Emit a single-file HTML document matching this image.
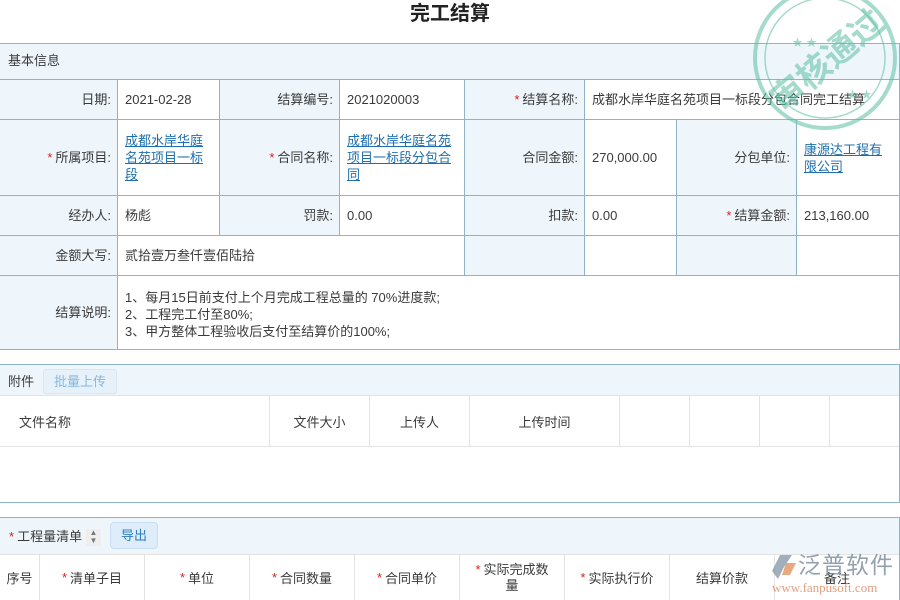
<!DOCTYPE html>
<html><head><meta charset="utf-8">
<style>
*{margin:0;padding:0;box-sizing:border-box}
body{width:900px;height:600px;overflow:hidden;background:#fff;font-family:"Liberation Sans","Noto Sans CJK SC",sans-serif;font-size:13px;color:#3a3a3a;position:relative}
.a{position:absolute}
.c{position:absolute;border-right:1px solid #8fb4c8;border-bottom:1px solid #8fb4c8;display:flex;align-items:center;padding:0 7px;line-height:17px}
.l{background:#eef6fc;justify-content:flex-end;padding-right:6px}
.v{background:#fff}
.s{color:#d9201c;margin-right:3px}
a{color:#1d6fae;text-decoration:underline}
.h{position:absolute;border-right:1px solid #e3e3e3;display:flex;align-items:center;justify-content:center;height:100%;top:0}
</style></head><body>
<div class="a" style="left:0;top:1px;width:900px;text-align:center;font-size:20px;font-weight:bold;color:#222;line-height:26px">完工结算</div>

<div class="a" style="left:0;top:43px;width:900px;height:37px;background:#eef6fc;border-top:1px solid #8fb4c8;border-bottom:1px solid #8fb4c8;border-right:1px solid #8fb4c8;padding-left:8px;line-height:34px">基本信息</div>

<div class="c l" style="left:0;top:80px;width:118px;height:40px">日期:</div>
<div class="c v" style="left:118px;top:80px;width:102px;height:40px">2021-02-28</div>
<div class="c l" style="left:220px;top:80px;width:120px;height:40px">结算编号:</div>
<div class="c v" style="left:340px;top:80px;width:125px;height:40px">2021020003</div>
<div class="c l" style="left:465px;top:80px;width:120px;height:40px"><span class="s">*</span>结算名称:</div>
<div class="c v" style="left:585px;top:80px;width:315px;height:40px">成都水岸华庭名苑项目一标段分包合同完工结算</div>

<div class="c l" style="left:0;top:120px;width:118px;height:76px"><span class="s">*</span>所属项目:</div>
<div class="c v" style="left:118px;top:120px;width:102px;height:76px"><a>成都水岸华庭名苑项目一标段</a></div>
<div class="c l" style="left:220px;top:120px;width:120px;height:76px"><span class="s">*</span>合同名称:</div>
<div class="c v" style="left:340px;top:120px;width:125px;height:76px"><a>成都水岸华庭名苑项目一标段分包合同</a></div>
<div class="c l" style="left:465px;top:120px;width:120px;height:76px">合同金额:</div>
<div class="c v" style="left:585px;top:120px;width:92px;height:76px">270,000.00</div>
<div class="c l" style="left:677px;top:120px;width:120px;height:76px">分包单位:</div>
<div class="c v" style="left:797px;top:120px;width:103px;height:76px"><a>康源达工程有限公司</a></div>

<div class="c l" style="left:0;top:196px;width:118px;height:40px">经办人:</div>
<div class="c v" style="left:118px;top:196px;width:102px;height:40px">杨彪</div>
<div class="c l" style="left:220px;top:196px;width:120px;height:40px">罚款:</div>
<div class="c v" style="left:340px;top:196px;width:125px;height:40px">0.00</div>
<div class="c l" style="left:465px;top:196px;width:120px;height:40px">扣款:</div>
<div class="c v" style="left:585px;top:196px;width:92px;height:40px">0.00</div>
<div class="c l" style="left:677px;top:196px;width:120px;height:40px"><span class="s">*</span>结算金额:</div>
<div class="c v" style="left:797px;top:196px;width:103px;height:40px">213,160.00</div>

<div class="c l" style="left:0;top:236px;width:118px;height:40px">金额大写:</div>
<div class="c v" style="left:118px;top:236px;width:347px;height:40px">贰拾壹万叁仟壹佰陆拾</div>
<div class="c l" style="left:465px;top:236px;width:120px;height:40px"></div>
<div class="c v" style="left:585px;top:236px;width:92px;height:40px"></div>
<div class="c l" style="left:677px;top:236px;width:120px;height:40px"></div>
<div class="c v" style="left:797px;top:236px;width:103px;height:40px"></div>

<div class="c l" style="left:0;top:276px;width:118px;height:74px">结算说明:</div>
<div class="c v" style="left:118px;top:276px;width:782px;height:74px;display:block;padding-top:13px">1、每月15日前支付上个月完成工程总量的 70%进度款;<br>2、工程完工付至80%;<br>3、甲方整体工程验收后支付至结算价的100%;</div>

<div class="a" style="left:0;top:364px;width:900px;height:139px;border-top:1px solid #8fb4c8;border-bottom:1px solid #8fb4c8;border-right:1px solid #8fb4c8"></div>
<div class="a" style="left:0;top:365px;width:899px;height:31px;background:#eef6fc;border-bottom:1px solid #e3e3e3"></div>
<div class="a" style="left:8px;top:373px;line-height:17px">附件</div>
<div class="a" style="left:43px;top:369px;width:74px;height:25px;border:1px solid #d6e6f2;border-radius:3px;background:#e6f1fa;color:#8ab8dc;text-align:center;line-height:23px">批量上传</div>
<div class="a" style="left:0;top:396px;width:899px;height:51px;border-bottom:1px solid #e3e3e3">
 <div class="h" style="left:0;width:270px;justify-content:flex-start;padding-left:19px">文件名称</div>
 <div class="h" style="left:270px;width:100px">文件大小</div>
 <div class="h" style="left:370px;width:100px">上传人</div>
 <div class="h" style="left:470px;width:150px">上传时间</div>
 <div class="h" style="left:620px;width:70px"></div>
 <div class="h" style="left:690px;width:70px"></div>
 <div class="h" style="left:760px;width:70px"></div>
</div>

<div class="a" style="left:0;top:517px;width:900px;height:83px;border-top:1px solid #8fb4c8;border-right:1px solid #8fb4c8"></div>
<div class="a" style="left:0;top:518px;width:899px;height:37px;background:#eef6fc;border-bottom:1px solid #e3e3e3"></div>
<div class="a" style="left:9px;top:528px;line-height:17px"><span class="s">*</span>工程量清单</div>
<div class="a" style="left:86px;top:529px;width:15px;height:17px;background:#eee;font-size:8px;line-height:8px;color:#777;text-align:center">▲<br>▼</div>
<div class="a" style="left:110px;top:522px;width:48px;height:27px;border:1px solid #c8def0;border-radius:4px;background:#deedf9;color:#2a7bc0;text-align:center;line-height:25px">导出</div>
<div class="a" style="left:0;top:555px;width:899px;height:45px">
 <div class="h" style="left:0;width:40px">序号</div>
 <div class="h" style="left:40px;width:105px"><span class="s">*</span>清单子目</div>
 <div class="h" style="left:145px;width:105px"><span class="s">*</span>单位</div>
 <div class="h" style="left:250px;width:105px"><span class="s">*</span>合同数量</div>
 <div class="h" style="left:355px;width:105px"><span class="s">*</span>合同单价</div>
 <div class="h" style="left:460px;width:105px;text-align:center;line-height:16px"><span><span class="s">*</span>实际完成数<br>量</span></div>
 <div class="h" style="left:565px;width:105px"><span class="s">*</span>实际执行价</div>
 <div class="h" style="left:670px;width:105px">结算价款</div>
 <div class="h" style="left:775px;width:124px;border:none">备注</div>
</div>

<svg class="a" style="left:747px;top:-12px" width="155" height="150" viewBox="0 0 155 150">
 <g opacity="0.55" fill="none" stroke="#5bbfa4">
  <circle cx="78" cy="70" r="70" stroke-width="4"/>
  <circle cx="78" cy="70" r="60" stroke-width="1.5"/>
 </g>
 <g opacity="0.55" fill="#5bbfa4" font-size="11">
  <text x="45" y="58">★ ★</text><text x="100" y="110">★ ★</text>
 </g>
 <text x="78" y="85" transform="rotate(-40 78 70)" text-anchor="middle" font-family="Liberation Sans,Noto Sans CJK SC,sans-serif" font-weight="bold" font-size="34" fill="#5bbfa4" opacity="0.55">审核通过</text>
</svg>

<svg class="a" style="left:770px;top:553px" width="30" height="28" viewBox="0 0 30 28">
 <path d="M10 2 L22 2 L14 14 L8 26 L2 18 Z" fill="#8a9aaa" opacity="0.8"/>
 <path d="M16 10 L26 10 L20 22 L12 22 Z" fill="#e39a6a" opacity="0.85"/>
</svg>
<div class="a" style="left:798px;top:551px;font-size:23px;color:#8090a4;opacity:0.85;letter-spacing:1px;line-height:28px">泛普软件</div>
<div class="a" style="left:772px;top:581px;font-family:'Liberation Serif',serif;font-size:13px;color:#e0a080;line-height:14px">www.fanpusoft.com</div>
</body></html>
